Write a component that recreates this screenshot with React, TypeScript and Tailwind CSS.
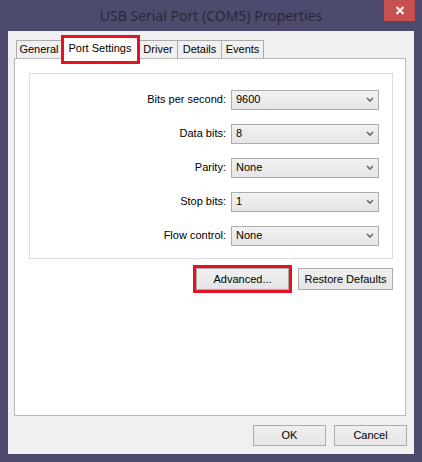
import React from 'react';

const font = { fontFamily: '"Liberation Sans", Arial, sans-serif' };

const fields = [
  { label: 'Bits per second:', value: '9600' },
  { label: 'Data bits:', value: '8' },
  { label: 'Parity:', value: 'None' },
  { label: 'Stop bits:', value: '1' },
  { label: 'Flow control:', value: 'None' },
];

const tabs = [
  { name: 'General', w: 'w-[46px]' },
  { name: 'Port Settings', w: 'w-[78px]', active: true },
  { name: 'Driver', w: 'w-[40px]' },
  { name: 'Details', w: 'w-[45px]' },
  { name: 'Events', w: 'w-[43px]' },
];

function Chevron() {
  return (
    <svg width="8" height="6" viewBox="0 0 8 6" className="shrink-0">
      <polyline points="1,1 4,4 7,1" fill="none" stroke="#6a6a6a" strokeWidth="1.6" />
    </svg>
  );
}

function Combo({ value }: { value: string }) {
  return (
    <div className="flex h-[20px] w-[148px] items-center justify-between border border-[#acacac] bg-gradient-to-b from-[#f2f2f2] to-[#e5e5e5] pl-[4px] pr-[4px] text-[11px] text-black">
      <span>{value}</span>
      <Chevron />
    </div>
  );
}

function Button({ children, className = '' }: { children: React.ReactNode; className?: string }) {
  return (
    <div
      className={`flex items-center justify-center border border-[#acacac] bg-gradient-to-b from-[#f0f0f0] to-[#e5e5e5] text-[11px] text-black ${className}`}
    >
      {children}
    </div>
  );
}

export default function App() {
  return (
    <div className="flex h-[462px] w-[422px] flex-col bg-[#4c4b6d]" style={font}>
      {/* title bar */}
      <div className="relative flex h-[31px] shrink-0 items-center justify-center">
        <span
          className="text-[14px] text-[#29283a]"
          style={{ fontFamily: '"Noto Sans", "Open Sans", sans-serif' }}
        >
          USB Serial Port (COM5) Properties
        </span>
        <div className="absolute right-[7px] top-0 flex h-[21px] w-[31px] items-center justify-center bg-[#c75050]">
          <svg width="10" height="9" viewBox="0 0 10 9">
            <path d="M1.5 1 L8.5 8 M8.5 1 L1.5 8" stroke="#fff" strokeWidth="2" />
          </svg>
        </div>
      </div>

      {/* client area */}
      <div className="mx-[8px] mb-[8px] flex flex-1 flex-col bg-[#f0f0f0]">
        <div className="flex h-[27px] items-end pl-[8px]">
          {tabs.map((t, i) =>
            t.active ? (
              <div
                key={t.name}
                className={`relative z-10 -mb-px -ml-px flex h-[23px] ${t.w} items-start justify-center border border-b-0 border-[#acacac] bg-white pt-[3px] text-[11px] text-black`}
              >
                {t.name}
                <div className="absolute -bottom-[5px] -left-px -right-[2px] -top-[2px] border-[3px] border-[#e81123]" />
              </div>
            ) : (
              <div
                key={t.name}
                className={`flex h-[18px] ${t.w} ${i > 0 ? '-ml-px' : ''} items-center justify-center border border-b-0 border-[#acacac] bg-[#f0f0f0] text-[11px] text-black`}
              >
                {t.name}
              </div>
            )
          )}
        </div>

        {/* tab page */}
        <div className="ml-[6px] flex h-[358px] w-[392px] flex-col border border-[#b9b9b9] bg-white">
          <div className="ml-[14px] mt-[14px] flex h-[186px] w-[364px] flex-col gap-[13px] border border-[#dcdcdc] pt-[15px]">
            {fields.map((f) => (
              <div key={f.label} className="flex h-[21px] items-center">
                <span className="w-[196px] text-right text-[11px] text-black">{f.label}</span>
                <div className="ml-[5px]">
                  <Combo value={f.value} />
                </div>
              </div>
            ))}
          </div>

          <div className="mr-[12px] mt-[9px] flex justify-end gap-[9px]">
            <div className="relative">
              <Button className="h-[22px] w-[93px]">Advanced...</Button>
              <div className="absolute -inset-[3px] border-[3px] border-[#e81123]" />
            </div>
            <Button className="h-[22px] w-[95px]">Restore Defaults</Button>
          </div>
        </div>

        <div className="mr-[7px] mt-[9px] flex justify-end gap-[8px]">
          <Button className="h-[21px] w-[73px] border-[#3c8fe0]">OK</Button>
          <Button className="h-[21px] w-[73px]">Cancel</Button>
        </div>
      </div>
    </div>
  );
}
